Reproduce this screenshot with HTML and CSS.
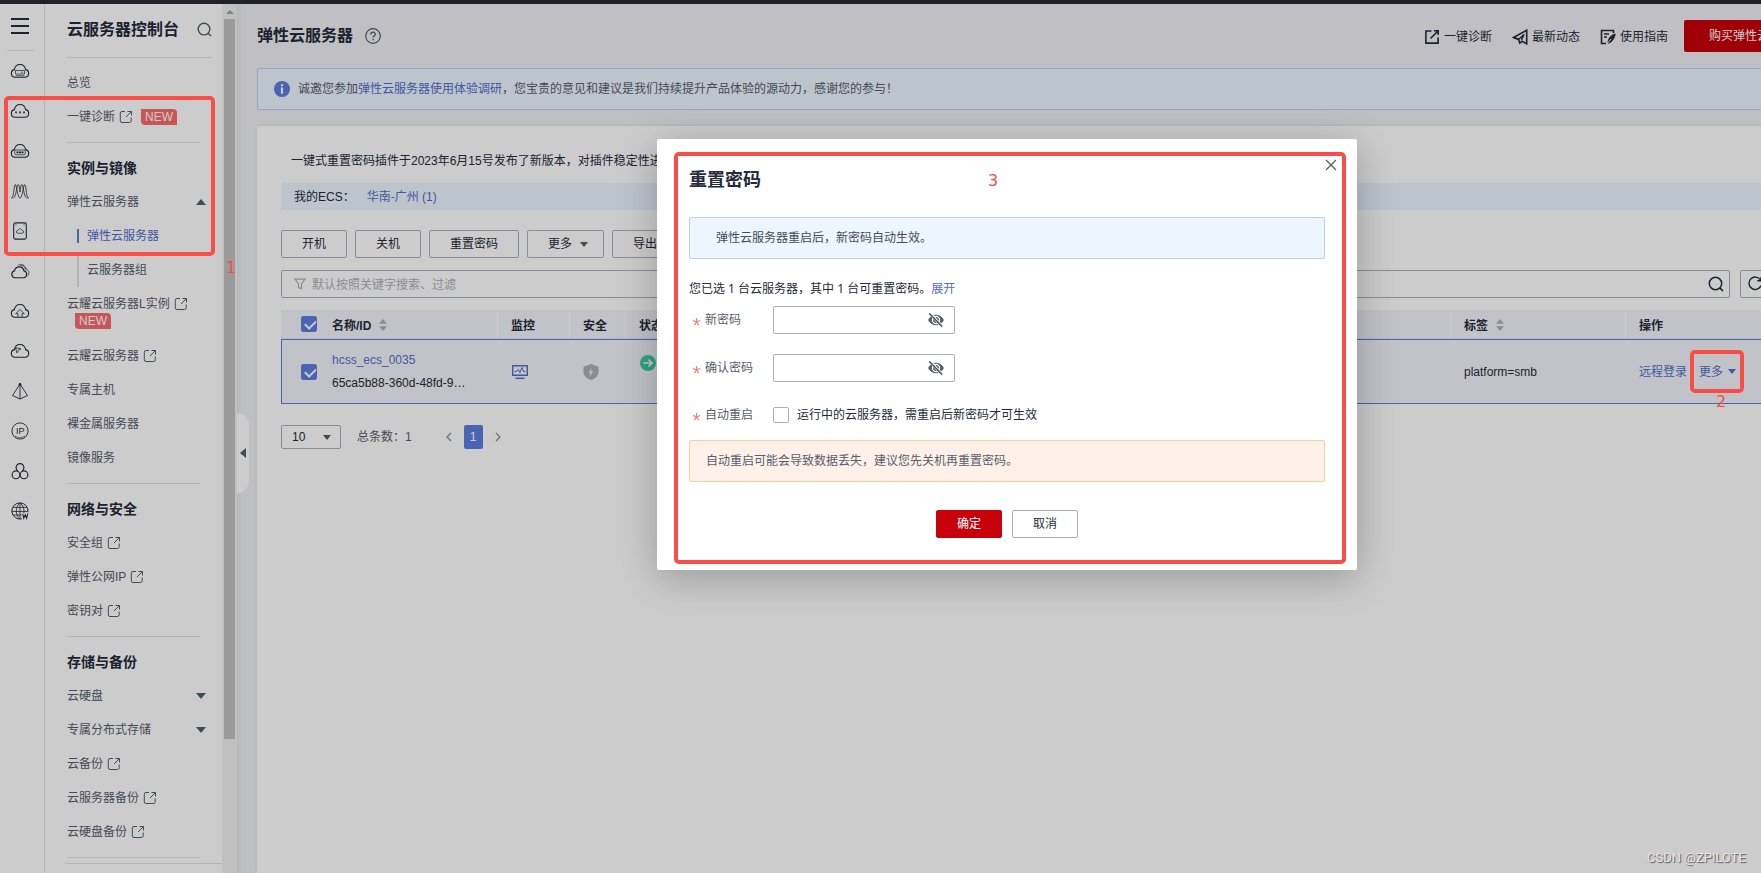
FILE: index.html
```html
<!DOCTYPE html>
<html lang="zh-CN">
<head>
<meta charset="utf-8">
<title>弹性云服务器</title>
<link rel="stylesheet" href="styles.css">
</head>
<body>
<svg class="defs" aria-hidden="true">
  <symbol id="ext" viewBox="0 0 14 14"><path d="M6 1.500H3a1.700 1.700 0 0 0-1.700 1.700v7.600A1.700 1.700 0 0 0 3 12.500h7.500a1.700 1.700 0 0 0 1.700-1.700V7.500M8.500 1.500h4v4M12.300 1.700L7 7" fill="none" stroke="currentColor" stroke-width="1"/></symbol>
  <symbol id="search" viewBox="0 0 16 16"><circle cx="7.500" cy="7.500" r="6.200" fill="none" stroke="currentColor" stroke-width="1.500"/><path d="M11.500 11.700L15 15" stroke="currentColor" stroke-width="1.600"/></symbol>
  <symbol id="cloud" viewBox="0 0 20 16"><path d="M5 14.300a3.900 3.900 0 0 1-.6-7.700C4.900 3.600 7 1.500 10 1.500s5.100 2.100 5.600 5.100a3.900 3.900 0 0 1-.6 7.700z" fill="none" stroke="currentColor" stroke-width="1.100"/></symbol>
  <symbol id="sort" viewBox="0 0 10 14"><path d="M5 1l4 4.700H1zM5 13L1 8.300h8z" fill="currentColor"/></symbol>
  <symbol id="eye" viewBox="0 0 18 16"><path d="M1 8c2-3.500 4.800-5.200 8-5.200S15 4.500 17 8c-2 3.500-4.800 5.200-8 5.200S3 11.500 1 8z" fill="currentColor"/><circle cx="9" cy="8" r="3.600" fill="none" stroke="#fff" stroke-width="1.200"/><path d="M2.500 1l12.700 13.500" stroke="#fff" stroke-width="3"/><path d="M2.200 1.400l13 13.200" stroke="currentColor" stroke-width="1.600"/></symbol>
</svg>

<div class="topbar"></div>
<div class="shell">
  <nav class="rail" aria-label="服务">
    <button class="burger" aria-label="菜单"><i></i><i></i><i></i></button>
    <a href="#"><svg viewBox="0 0 20 16"><use href="#cloud"/><path d="M5.500 7.500h9v3.500h-9zM5.500 12.700h9M11 9.200h2" fill="none" stroke="currentColor" stroke-width=".7"/></svg></a>
    <a href="#"><svg viewBox="0 0 20 16"><use href="#cloud"/><path d="M5.200 9.300h1.700M9.200 9.300h1.700M13.200 9.300h1.700" stroke="currentColor" stroke-width="1.700"/></svg></a>
    <a href="#"><svg viewBox="0 0 20 16"><use href="#cloud"/><rect x="4.800" y="7" width="10.400" height="4.800" rx="1" fill="none" stroke="currentColor" stroke-width=".7"/><path d="M6.500 9.400h2M9 9.400h2M11.500 9.400h2" stroke="currentColor" stroke-width="1.600"/></svg></a>
    <a href="#"><svg viewBox="0 0 20 16"><path d="M1 15h1.200C4 12 4 1.500 5.300 1.500S7.500 15 10 15s3.300-13.500 4.700-13.500S16 12 17.800 15H19M3.500 15C6.200 14 6.800 1.500 8 1.500M16.500 15C13.800 14 13.200 1.500 12 1.500M8 1.500c1.200 0 1.500 4 2 7.500.5-3.500.8-7.500 2-7.500" fill="none" stroke="currentColor" stroke-width=".8"/></svg></a>
    <a href="#"><svg viewBox="0 0 20 20"><rect x="3" y="1" width="14" height="18" rx="2" fill="none" stroke="currentColor" stroke-width="1.200"/><path d="M7.500 12.500a1.500 1.500 0 0 1 0-3C8 7 12 7 12.500 9.500a1.500 1.500 0 0 1 0 3z" fill="none" stroke="currentColor" stroke-width=".8"/><path d="M5 3.200h1M14 3.200h1" stroke="currentColor"/></svg></a>
    <a href="#"><svg viewBox="0 0 20 16"><path d="M5 14.800a3.500 3.500 0 0 1-.5-6.900c.6-2.700 2.200-4 4.700-4s4.200 1.400 4.700 4a3.500 3.500 0 0 1-.4 6.900z" fill="none" stroke="currentColor" stroke-width="1.100"/><path d="M8 2.400c3-2.200 7.500-.6 8 3.800 3.500.9 3.700 5 1.500 6.600M10 3c2.500-1.500 4.800.5 5.300 3.800" fill="none" stroke="currentColor" stroke-width=".7"/></svg></a>
    <a href="#"><svg viewBox="0 0 20 16"><use href="#cloud"/><path d="M8 14v-3.300H5.700L10 6.500l4.300 4.200H12V14" fill="none" stroke="currentColor" stroke-width=".8"/></svg></a>
    <a href="#"><svg viewBox="0 0 20 16"><use href="#cloud"/><path d="M5.500 4.800l5.500 1-2.500 1.500L7 10z" fill="none" stroke="currentColor" stroke-width=".8"/></svg></a>
    <a href="#"><svg viewBox="0 0 20 18"><path d="M10 2L2.500 13.500 10 17l7.500-3.500zM10 2v15" fill="none" stroke="currentColor" stroke-width=".9"/><circle cx="10" cy="2.200" r="1.300" fill="currentColor"/></svg></a>
    <a href="#"><svg viewBox="0 0 20 20"><circle cx="10" cy="10" r="9" fill="none" stroke="currentColor"/><text x="5.500" y="13" class="ip">IP</text><path d="M4.500 15.500c3 2.500 8 2.500 11 0" fill="none" stroke="currentColor" stroke-width=".7"/></svg></a>
    <a href="#"><svg viewBox="0 0 20 18"><g fill="none" stroke="currentColor" stroke-width="1.100"><path d="M7.700 8.700a3.900 3.900 0 1 1 4.600 0"/><circle cx="6" cy="12.800" r="3.900"/><circle cx="14" cy="12.800" r="3.900"/></g></svg></a>
    <a href="#"><svg viewBox="0 0 20 20"><g fill="none" stroke="currentColor" stroke-width=".9"><path d="M12 18.700a9 9 0 1 1 6.800-7.200" stroke-width="1.100"/><path d="M10 1.200C4.500 5 4.500 15 10 18.700M10 1.200c3.500 2.300 5 6.500 4.300 11M10 1.200v17.500M2.500 6h15M1 10.500h17.500M2.500 14.500h9"/><path d="M13 13l1.200 5 1.600-4 1.600 4 1.200-5" stroke-width="1.200"/></g></svg></a>
  </nav>

  <aside class="menu">
    <header class="menu-head"><h2>云服务器控制台</h2><button aria-label="搜索"><svg><use href="#search"/></svg></button></header>
    <ul>
      <li><a href="#">总览</a></li>
      <li><a href="#">一键诊断<svg><use href="#ext"/></svg></a><b class="new">NEW</b></li>
    </ul>
    <h3>实例与镜像</h3>
    <ul>
      <li><a href="#">弹性云服务器</a><i class="caret up"></i></li>
      <li class="sub active"><a href="#">弹性云服务器</a></li>
      <li class="sub"><a href="#">云服务器组</a></li>
      <li class="tall"><a href="#">云耀云服务器L实例<svg><use href="#ext"/></svg></a><b class="new">NEW</b></li>
      <li><a href="#">云耀云服务器<svg><use href="#ext"/></svg></a></li>
      <li><a href="#">专属主机</a></li>
      <li><a href="#">裸金属服务器</a></li>
      <li><a href="#">镜像服务</a></li>
    </ul>
    <h3>网络与安全</h3>
    <ul>
      <li><a href="#">安全组<svg><use href="#ext"/></svg></a></li>
      <li><a href="#">弹性公网IP<svg><use href="#ext"/></svg></a></li>
      <li><a href="#">密钥对<svg><use href="#ext"/></svg></a></li>
    </ul>
    <h3>存储与备份</h3>
    <ul>
      <li><a href="#">云硬盘</a><i class="caret"></i></li>
      <li><a href="#">专属分布式存储</a><i class="caret"></i></li>
      <li><a href="#">云备份<svg><use href="#ext"/></svg></a></li>
      <li><a href="#">云服务器备份<svg><use href="#ext"/></svg></a></li>
      <li><a href="#">云硬盘备份<svg><use href="#ext"/></svg></a></li>
    </ul>
    <div class="menu-end"></div>
  </aside>
  <div class="scroll"><i></i><span></span></div>

  <main>
    <button class="fold" aria-label="收起"><i></i></button>
    <div class="page">
      <header class="head">
        <h1>弹性云服务器</h1>
        <svg class="help" viewBox="0 0 16 16"><circle cx="8" cy="8" r="7.300" fill="none" stroke="currentColor" stroke-width="1.200"/><path d="M5.800 6.400c0-2.900 4.500-2.900 4.500-.2 0 1.700-2.200 1.700-2.200 3.300M8.100 10.700v1.500" fill="none" stroke="currentColor" stroke-width="1.300"/></svg>
        <nav>
          <a href="#"><svg viewBox="0 0 16 16"><path d="M7.500 2H1.900v12.100h12.200V8.500M14.500 1.500L6.500 9.500M10 1.800h4.200V6" fill="none" stroke="currentColor" stroke-width="1.600"/></svg>一键诊断</a>
          <a href="#"><svg viewBox="0 0 16 16"><path d="M1.500 8.500L14.700 1.200v13.600L10 12.200l-2.200 2-1.300-4z" fill="none" stroke="currentColor" stroke-width="1.600"/><path d="M1.500 8.500l5 2 5.500-5-2.500 5.500" fill="none" stroke="currentColor" stroke-width="1.500"/></svg>最新动态</a>
          <a href="#"><svg viewBox="0 0 16 16"><path d="M13.500 4V1.500h-12v13H6M4 5h5M4 8h3" fill="none" stroke="currentColor" stroke-width="1.600"/><path d="M15.800 4.500c-1 5-3 9-8.300 10.500C7 10 10.500 5.500 15.800 4.500z" fill="currentColor"/><path d="M6.500 15.500l4.500-5.500" stroke="#f0f1f5"/></svg>使用指南</a>
        </nav>
        <button class="buy">购买弹性云服务器</button>
      </header>

      <div class="notice">
        <svg viewBox="0 0 16 16"><circle cx="8" cy="8" r="8" fill="#5e7ce0"/><path d="M8 3.300v2M8 6.500v6.200" stroke="#fff" stroke-width="2.200"/></svg>
        <p>诚邀您参加<a href="#">弹性云服务器使用体验调研</a>，您宝贵的意见和建议是我们持续提升产品体验的源动力，感谢您的参与！</p>
      </div>

      <section class="card">
        <p class="news">一键式重置密码插件于2023年6月15号发布了新版本，对插件稳定性进行了优化</p>
        <div class="mine"><span>我的ECS：</span><a href="#">华南-广州 (1)</a></div>
        <div class="tools">
          <button>开机</button><button>关机</button><button>重置密码</button><button>更多<i class="caret"></i></button><button>导出</button>
        </div>
        <div class="filter">
          <div class="box">
            <svg class="funnel" viewBox="0 0 12 12"><path d="M1 1.200h10L7.500 6v4.700l-3-1.200V6z" fill="none" stroke="currentColor" stroke-width="1.200"/></svg>
            <input type="text" aria-label="搜索" placeholder="默认按照关键字搜索、过滤">
            <svg><use href="#search"/></svg>
          </div>
          <button aria-label="刷新"><svg viewBox="0 0 16 16"><path d="M13.500 4A6.200 6.200 0 1 0 14 9.500M14 1v3.700h-3.700" fill="none" stroke="currentColor" stroke-width="1.400"/></svg></button>
          <button aria-label="设置"></button>
        </div>
        <table>
          <colgroup><col class="c1"><col class="c2"><col class="c3"><col class="c4"><col><col class="c6"><col class="c7"></colgroup>
          <thead><tr>
            <th><input type="checkbox" aria-label="全选" checked></th><th class="flush">名称/ID<svg><use href="#sort"/></svg></th><th>监控</th><th>安全</th><th>状态</th><th>标签<svg><use href="#sort"/></svg></th><th>操作</th>
          </tr></thead>
          <tbody><tr>
            <td><input type="checkbox" aria-label="选择 hcss_ecs_0035" checked></td>
            <td class="flush two"><a href="#">hcss_ecs_0035</a><span>65ca5b88-360d-48fd-9…</span></td>
            <td><svg class="mon" viewBox="0 0 18 16"><path d="M1.700 1.700h14.600v9.600H1.700z" fill="none" stroke="#526ecc" stroke-width="1.400"/><path d="M4.500 14.300h9" stroke="#526ecc" stroke-width="1.500"/><path d="M3.500 7.500h2l1.700-2 1.700 3 2-5 1.500 4h2" fill="none" stroke="#526ecc"/></svg></td>
            <td><svg class="shield" viewBox="0 0 16 16"><path d="M8 0l7.500 2.800v5.400c0 3.500-3 6.300-7.500 7.800C3.500 14.500.5 11.700.5 8.200V2.800z" fill="#adb0b8"/><path d="M8.800 4L5.500 8.700h2l-.7 3.800 3.500-5h-2z" fill="#f0f1f5"/></svg></td>
            <td class="state"><svg viewBox="0 0 16 16"><circle cx="8" cy="8" r="8" fill="#3dcca6"/><path d="M3.500 8h8M8.500 4.500L12 8l-3.500 3.500" fill="none" stroke="#fff" stroke-width="1.600"/></svg></td>
            <td>platform=smb</td>
            <td><div class="ops"><a href="#">远程登录</a><a href="#">更多<i class="caret"></i></a></div></td>
          </tr></tbody>
        </table>
        <div class="pager">
          <label class="size"><select aria-label="每页条数"><option>10</option></select><i class="caret"></i></label>
          <span>总条数：1</span>
          <div class="nums">
            <button aria-label="上一页"><svg viewBox="0 0 8 10"><path d="M6 1L2 5l4 4" fill="none" stroke="currentColor" stroke-width="1.300"/></svg></button>
            <button class="on">1</button>
            <button aria-label="下一页"><svg viewBox="0 0 8 10"><path d="M2 1l4 4-4 4" fill="none" stroke="currentColor" stroke-width="1.300"/></svg></button>
          </div>
        </div>
      </section>
    </div>
  </main>
</div>

<div class="overlay">
  <form class="dialog" role="dialog" aria-label="重置密码">
    <header><h2>重置密码</h2><button type="button" class="close" aria-label="关闭"><svg viewBox="0 0 12 12"><path d="M1 1l10 10M11 1L1 11" stroke="currentColor" stroke-width="1.300"/></svg></button></header>
    <p class="tip">弹性云服务器重启后，新密码自动生效。</p>
    <p class="picked">您已选 1 台云服务器，其中 1 台可重置密码。<a href="#">展开</a></p>
    <div class="field"><label for="p1"><svg viewBox="0 0 10 10"><path d="M5 1v4.500M1 4l4 1.500L9 4M2.500 9L5 5.500 7.500 9" fill="none" stroke="#fa7570" stroke-width="1.200"/></svg>新密码</label><div class="pw"><input id="p1" type="password"><svg><use href="#eye"/></svg></div></div>
    <div class="field"><label for="p2"><svg viewBox="0 0 10 10"><path d="M5 1v4.500M1 4l4 1.500L9 4M2.500 9L5 5.500 7.500 9" fill="none" stroke="#fa7570" stroke-width="1.200"/></svg>确认密码</label><div class="pw"><input id="p2" type="password"><svg><use href="#eye"/></svg></div></div>
    <div class="field auto"><span class="name"><svg viewBox="0 0 10 10"><path d="M5 1v4.500M1 4l4 1.500L9 4M2.500 9L5 5.500 7.500 9" fill="none" stroke="#fa7570" stroke-width="1.200"/></svg>自动重启</span><input id="auto" type="checkbox"><label class="opt" for="auto">运行中的云服务器，需重启后新密码才可生效</label></div>
    <p class="warn">自动重启可能会导致数据丢失，建议您先关机再重置密码。</p>
    <footer><button type="button" class="ok">确定</button><button type="button">取消</button></footer>
  </form>
</div>

<div class="mark m1"></div><span class="num n1">1</span>
<div class="mark m2"></div><span class="num n2">2</span>
<div class="mark m3"></div><span class="num n3">3</span>
<div class="credit">CSDN @ZPILOTE</div>
</body>
</html>
```
FILE: styles.css
```css
* { box-sizing: border-box; margin: 0; padding: 0; }
body {
  height: 100vh; overflow: hidden; display: flex; flex-direction: column; position: relative;
  background: #f0f1f5; color: #252b3a;
  font: 12px/18px "Liberation Sans", "Noto Sans CJK SC", sans-serif;
}
a { color: #526ecc; text-decoration: none; }
button { font: inherit; color: inherit; background: none; border: 0; }
input, select { font: inherit; color: inherit; }
svg { display: block; flex: none; }
ul { list-style: none; }
.defs { width: 0; height: 0; position: absolute; }
.topbar { height: 4px; background: #282b33; flex: none; }
.shell { flex: 1; min-height: 0; display: flex; }

.caret { display: block; border: 5px solid transparent; border-top: 6px solid #575d6c; border-bottom: 0; }
.caret.up { border-top: 0; border-bottom: 6px solid #575d6c; }

.rail { width: 45px; flex: none; background: #fff; border-right: 1px solid #dfe1e6; display: flex; flex-direction: column; padding-right: 5px; }
.burger { height: 47px; margin: 0 5px 0 7px; padding: 0 0 3px 4px; border-bottom: 1px solid #dfe1e6; display: flex; flex-direction: column; justify-content: center; gap: 5px; }
.burger i { width: 18px; height: 2px; background: #252b3a; }
.rail a { height: 40px; display: grid; place-items: center; color: #252b3a; }
.rail svg { width: 20px; height: 18px; }
.ip { font-size: 10px; fill: currentColor; }

.menu { width: 177px; flex: none; background: #fff; overflow: hidden; }
.menu-head { height: 54px; margin: 0 10px 7px 22px; padding-bottom: 2px; display: flex; align-items: center; justify-content: space-between; border-bottom: 1px solid #dfe1e6; }
.menu-head h2 { font-size: 16px; line-height: 24px; }
.menu-head svg { width: 15px; height: 15px; color: #575d6c; }
.menu ul { padding: 0 16px 0 22px; }
.menu li { height: 34px; display: flex; align-items: center; padding-top: 2px; }
.menu li a { display: flex; align-items: center; gap: 4px; color: #575d6c; }
.menu li svg { width: 14px; height: 14px; }
.menu li .caret { margin-left: auto; }
.menu li.sub { margin-left: 10px; }
.menu li.sub a { border-left: 2px solid #dfe1e6; padding-left: 8px; height: 34px; }
.menu li.sub.active a { color: #526ecc; height: 14px; border-color: #5e7ce0; }
.menu li.tall { height: 52px; flex-wrap: wrap; align-content: center; padding-top: 0; }
.new { background: #fa6c6c; color: #fff; font-weight: 400; line-height: 16px; padding: 0 4px; border-radius: 0 4px 0 4px; margin-left: 8px; }
.menu h3 { margin: 9px 22px 0; padding-top: 9px; border-top: 1px solid #dfe1e6; font-size: 14px; line-height: 32px; }
.menu-end { margin: 9px 0 0 20px; height: 7px; border-bottom: 1px solid #dfe1e6; background: linear-gradient(#dfe1e6, #dfe1e6) 2px 0 / 133px 1px no-repeat; }

.scroll { width: 15px; flex: none; background: #f1f1f1; padding: 6px 2px; }
.scroll i { display: block; width: 0; margin: 0 auto 5px; border: 4px solid transparent; border-top: 0; border-bottom: 4px solid #a3a3a3; }
.scroll span { display: block; height: 84%; background: #c1c1c1; }

main { flex: 1; min-width: 0; overflow: hidden; position: relative; background: linear-gradient(90deg, #e4e5ea, #f0f1f5 5px); }
.fold { position: absolute; left: 0; top: 409px; width: 12px; height: 80px; background: #fff; border-radius: 0 12px 12px 0; padding-left: 3px; }
.fold i { display: block; width: 0; border: 5px solid transparent; border-left: 0; border-right: 6px solid #575d6c; }
.page { margin: 0 -69px 0 20px; height: 100%; display: flex; flex-direction: column; }
.head { height: 64px; flex: none; display: flex; align-items: center; padding-bottom: 1px; }
.head h1 { font-size: 16px; line-height: 24px; }
.help { width: 16px; height: 16px; margin: 0 auto 0 12px; color: #575d6c; }
.head nav { display: flex; gap: 20px; margin-right: 16px; padding-top: 2px; }
.head nav a { display: flex; align-items: center; gap: 4px; color: #252b3a; }
.head nav svg { width: 16px; height: 16px; }
.buy { background: #c7000b; color: #fff; height: 32px; padding: 0 25px; border-radius: 2px; margin-top: 1px; }
.notice { height: 42px; flex: none; border: 1px solid #beccfa; border-radius: 2px; background: #ebf6ff; display: flex; align-items: center; gap: 8px; padding: 0 16px; color: #575d6c; }
.notice svg { width: 16px; height: 16px; }
.card { flex: 1; margin-top: 16px; background: #fff; padding: 26px 24px; box-shadow: 0 0 4px rgba(0, 0, 0, .1); }
.news { margin: 0 10px 13px; }
.mine { height: 27px; background: #ebf6ff; display: flex; align-items: center; padding: 0 13px; gap: 12px; border-radius: 2px; }
.tools { display: flex; gap: 8px; margin: 20px 0 12px; }
.tools button { height: 28px; padding: 0 20px; border: 1px solid #adb0b8; border-radius: 2px; display: flex; align-items: center; gap: 8px; }
.tools .caret { margin-right: -5px; border-width: 5px 4px 0; }
.filter { display: flex; gap: 10px; margin-bottom: 12px; }
.filter button { width: 28px; height: 28px; border: 1px solid #adb0b8; border-radius: 2px; padding-left: 6px; }
.filter .box { flex: 1; height: 28px; border: 1px solid #adb0b8; border-radius: 2px; display: flex; align-items: center; padding: 0 5px 0 12px; gap: 6px; }
.filter input { flex: 1; border: 0; background: none; outline: 0; padding-top: 1px; }
.filter input::placeholder { color: #adb0b8; }
.filter svg { width: 16px; height: 16px; }
.filter .funnel { width: 12px; height: 12px; color: #adb0b8; }

table { width: 100%; table-layout: fixed; border-collapse: separate; border-spacing: 0; background: #f2f4fb; }
.c1 { width: 50px; } .c2 { width: 167px; } .c3 { width: 72px; } .c4 { width: 56px; } .c6 { width: 175px; } .c7 { width: 180px; }
th { height: 29px; text-align: left; padding: 3px 0 0 13px; border-right: 1px solid #fff; border-bottom: 1px solid #e4e5ea; }
th:first-child { border-right: 0; padding: 0 0 0 20px; }
th svg { display: inline-block; width: 10px; height: 14px; margin-left: 7px; color: #adb0b8; vertical-align: -2px; }
td { height: 65px; padding: 0 0 0 13px; border-top: 1px solid #5e7ce0; border-bottom: 1px solid #5e7ce0; }
td:first-child { border-left: 1px solid #5e7ce0; padding-left: 19px; }
th.flush, td.flush { padding-left: 1px; }
.two a, .two span { display: block; line-height: 23px; }
td .mon { width: 18px; height: 16px; }
td .shield { width: 16px; height: 16px; }
td.state { vertical-align: top; padding: 15px 0 0 14px; }
.state svg { width: 16px; height: 16px; }
.ops { display: flex; gap: 12px; }
.ops a { display: flex; align-items: center; gap: 5px; }
.ops .caret { border-width: 5px 4px 0; border-top-color: #526ecc; }
input[type=checkbox] { appearance: none; display: block; width: 16px; height: 16px; border: 1px solid #adb0b8; border-radius: 2px; background: #fff; }
input[type=checkbox]:checked { border-color: #5e7ce0; background: #5e7ce0; overflow: hidden; }
input[type=checkbox]:checked::before { content: ""; display: block; width: 5px; height: 9px; margin: 1px 0 0 5px; border: solid #fff; border-width: 0 2px 2px 0; transform: rotate(45deg); }

.pager { display: flex; align-items: center; margin-top: 21px; color: #575d6c; }
.size { width: 60px; height: 24px; border: 1px solid #adb0b8; border-radius: 2px; display: flex; align-items: center; color: #252b3a; padding: 0 9px 0 10px; }
.size select { appearance: none; border: 0; background: none; flex: 1; min-width: 0; }
.size .caret { border-width: 5px 4px 0; }
.pager > span { margin-left: 16px; }
.nums { display: flex; align-items: center; gap: 11px; margin-left: 33px; }
.nums svg { width: 8px; height: 10px; color: #8a8e99; }
.nums .on { width: 19px; height: 24px; background: #5e7ce0; color: #fff; border-radius: 2px; }

.overlay { position: absolute; inset: 0; background: rgba(0, 0, 0, .2); padding: 139px 0 0 253px; }
.dialog { width: 700px; margin: 0 auto; padding: 27px 32px 32px; background: #fff; border-radius: 2px; box-shadow: 0 8px 40px rgba(0, 0, 0, .25); font-family: "Noto Sans", "Noto Sans CJK SC", sans-serif; position: relative; }
.dialog h2 { font-size: 18px; line-height: 27px; }
.close { position: absolute; top: 20px; right: 20px; color: #575d6c; }
.close svg { width: 12px; height: 12px; }
.tip, .warn { height: 42px; line-height: 40px; border: 1px solid #beccfa; border-radius: 2px; }
.tip { margin-top: 24px; padding-left: 26px; background: #ebf6ff; color: #464c59; }
.warn { margin-top: 14px; padding-left: 16px; background: #fff1e8; border-color: #ffcc9e; color: #575d6c; }
.picked { margin: 21px 0 8px; }
.field { display: flex; align-items: flex-start; height: 48px; }
.field > label:first-child, .name { width: 84px; height: 28px; display: flex; align-items: center; gap: 4px; padding-left: 3px; color: #575d6c; }
.field > label svg, .name svg { width: 9px; height: 9px; margin-top: 2px; }
.pw { width: 182px; height: 28px; border: 1px solid #adb0b8; border-radius: 2px; display: flex; align-items: center; padding: 0 9px; }
.pw input { flex: 1; min-width: 0; border: 0; outline: 0; background: none; }
.pw svg { width: 18px; height: 16px; color: #575d6c; }
.field.auto { height: 24px; padding-top: 2px; align-items: center; }
.opt { margin-left: 8px; }
.dialog footer { display: flex; justify-content: center; gap: 10px; margin-top: 28px; }
.dialog footer button { height: 28px; padding: 0 20px; border: 1px solid #adb0b8; border-radius: 2px; }
.dialog footer .ok { background: #c7000b; border-color: #c7000b; color: #fff; }

.mark { position: absolute; border: 4px solid #f94d48; border-radius: 5px; }
.m1 { left: 4px; top: 96px; width: 211px; height: 160px; }
.m2 { left: 1690px; top: 350px; width: 54px; height: 43px; }
.m3 { left: 674px; top: 152px; width: 672px; height: 412px; }
.num { position: absolute; color: #f94d48; font: 16px/18px "DejaVu Sans", sans-serif; }
.n1 { left: 226px; top: 259px; }
.n2 { left: 1716px; top: 393px; }
.n3 { left: 988px; top: 172px; }
.credit { position: absolute; right: 15px; bottom: 6px; color: #e6e6e6; font: 13px/18px Roboto, sans-serif; text-shadow: 1px 1px 1px #555; }
```
